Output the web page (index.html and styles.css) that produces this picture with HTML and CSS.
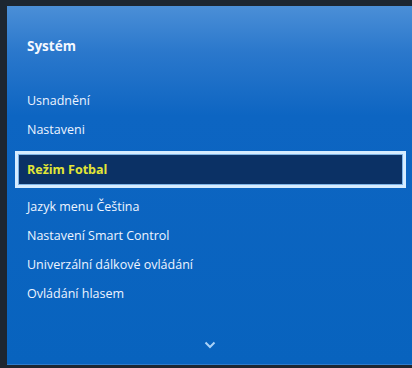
FILE: index.html
```html
<!DOCTYPE html>
<html lang="cs">
<head>
    <meta charset="UTF-8">
    <meta name="viewport" content="width=device-width, initial-scale=1.0">
    <title>Systém</title>
    <link rel="stylesheet" href="styles.css">
</head>
<body>
    <div class="panel">
        <h1 class="title">Systém</h1>
        <ul class="menu">
            <li class="item">Usnadnění</li>
            <li class="item">Nastaveni</li>
            <li class="item selected">Režim Fotbal</li>
            <li class="item">Jazyk menu Čeština</li>
            <li class="item">Nastavení Smart Control</li>
            <li class="item">Univerzální dálkové ovládání</li>
            <li class="item">Ovládání hlasem</li>
        </ul>
        <div class="more">
            <svg width="12" height="8" viewBox="0 0 12 8">
                <path d="M1.5 1.5 L6 6 L10.5 1.5" fill="none" stroke="#a9d2f7" stroke-width="2"/>
            </svg>
        </div>
    </div>
</body>
</html>
```

FILE: styles.css
```css
body {
    margin: 0;
    padding: 6px 0 3px 7px;
    background-color: #1d2631;
    font-family: "Open Sans", "Liberation Sans", sans-serif;
    height: 368px;
    box-sizing: border-box;
    overflow: hidden;
}
.panel {
    height: 359px;
    display: flex;
    flex-direction: column;
    background: linear-gradient(to bottom, #4b8fd7 0px, #2b78cc 45px, #0d65c2 110px, #0863be 100%);
    border-bottom: 1px solid #2f7ccc;
    box-sizing: border-box;
}
.title {
    margin: 0;
    padding: 31px 0 0 20px;
    font-size: 13.5px;
    font-weight: bold;
    color: #f4f8ff;
    line-height: 18px;
}
.menu {
    list-style: none;
    margin: 0;
    padding: 0;
    margin-top: 31px;
}
.item {
    padding-left: 20px;
    font-size: 12.5px;
    line-height: 29px;
    height: 29px;
    color: #eef4ff;
}
.item.selected {
    height: 37px;
    margin: 7px 6px 4px 8px;
    padding-left: 9px;
    border: 3px solid #d6ecff;
    box-shadow: inset 0 0 0 1px #7fb4e6;
    background-color: #0b3165;
    color: #e3e635;
    font-weight: bold;
    line-height: 31px;
    box-sizing: border-box;
}
.more {
    margin-top: auto;
    padding-bottom: 10px;
    text-align: center;
}
.more svg {
    display: inline-block;
}
```
